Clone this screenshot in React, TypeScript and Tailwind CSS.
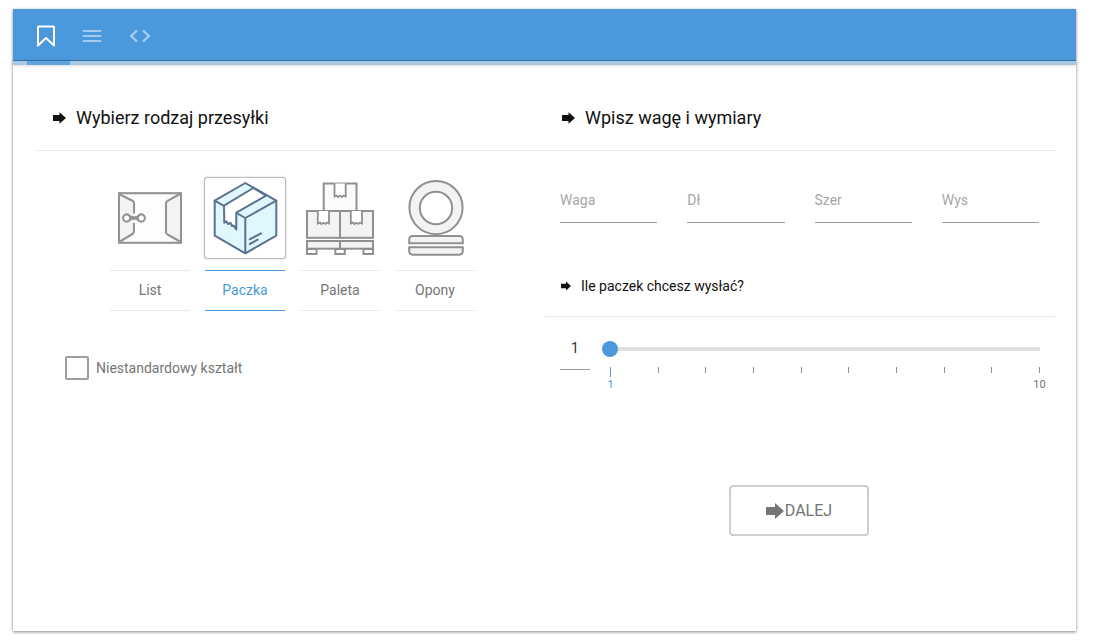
import { useState } from "react";
import type { ReactNode } from "react";

function Arrow({ className }: { className: string }) {
  return (
    <svg viewBox="0 0 18 16" className={className} fill="currentColor" aria-hidden="true">
      <path d="M0 4h9V0l9 8-9 8v-4H0z" />
    </svg>
  );
}

function BookmarkIcon() {
  return (
    <svg width="20" height="22" viewBox="0 0 20 22" fill="none" stroke="currentColor" strokeWidth="2" strokeLinejoin="round" aria-hidden="true">
      <path d="M2 2.5Q2 1.5 3 1.5H17Q18 1.5 18 2.5V20.5L10 13L2 20.5Z" />
    </svg>
  );
}

function LinesIcon() {
  return (
    <svg width="20" height="14" viewBox="0 0 20 14" fill="none" stroke="currentColor" strokeWidth="1.8" strokeLinecap="round" aria-hidden="true">
      <path d="M1.5 2h17M1.5 7h17M1.5 12h17" />
    </svg>
  );
}

function CodeIcon() {
  return (
    <svg width="22" height="14" viewBox="0 0 22 14" fill="none" stroke="currentColor" strokeWidth="2.4" aria-hidden="true">
      <path d="M8 1.5L2.2 7L8 12.5M14 1.5L19.8 7L14 12.5" />
    </svg>
  );
}

function EnvelopeArt() {
  return (
    <svg viewBox="0 0 80 80" className="size-20" fill="none" stroke="#939393" strokeWidth="2.1" aria-hidden="true">
      <rect x="9" y="15.2" width="62" height="49.6" fill="#fdfdfd" />
      <path d="M10 16L24 23.5V56L10 64Z" fill="#f3f3f3" stroke="none" />
      <path d="M70 16L57.5 22.8Q56 23.7 56 25.5V54Q56 55.5 57.5 56.5L70 63.5" fill="#f3f3f3" />
      <path d="M10 16.5L22.5 22.8Q24 23.5 24 25V35.5M24 45V53Q24 55 22.5 56L10 63.5" />
      <circle cx="16.7" cy="40" r="3.6" fill="#fff" />
      <circle cx="31.3" cy="40" r="3.6" fill="#fff" />
      <path d="M18.5 36.6C22 39.4 26 39.4 29.5 36.6L28.2 40L29.5 43.4C26 40.6 22 40.6 18.5 43.4L19.8 40Z" fill="#939393" stroke="#939393" strokeWidth="0.8" />
    </svg>
  );
}

function ParcelArt() {
  return (
    <svg viewBox="0 0 80 80" className="size-20" fill="none" stroke="#5a728f" strokeWidth="2" strokeLinejoin="round" strokeLinecap="round" aria-hidden="true">
      <path d="M40.3 5L71.3 22.7V57.7L40.3 75.3L9.7 57.7V22.7Z" fill="#e0f7fe" />
      <path d="M9.7 22.7L40.3 40L71.3 22.7M40.3 40V75.3" />
      <path d="M19 27.7L48.3 10L61 17.7L31.3 34.7V51.5L28.5 47.5L27 48.2L25.5 44.8L23 46L21.3 43.3L19.3 44.8Z" fill="#fff" />
      <path d="M44.8 61.3L56 55.3M44.8 66L52.7 61.7" />
    </svg>
  );
}

function PalletArt() {
  return (
    <svg viewBox="0 0 80 80" className="size-20" fill="#f3f3f3" stroke="#909090" strokeWidth="2" aria-hidden="true">
      <rect x="23.7" y="5.5" width="32.8" height="27.5" fill="#fbfbfb" />
      <rect x="7" y="33" width="33" height="26.8" />
      <rect x="40" y="33" width="33" height="26.8" />
      <g fill="#fff" strokeWidth="1.8">
        <path d="M34.5 5.5V18.5L36.5 17.5L38 19L40 17.8L42 19L43.7 17.5L45.7 18.5V5.5" />
        <path d="M17.8 33V45.6L20 44.5L21.5 46L23.4 44.8L25.3 46L27 44.5L29 45.6V33" />
        <path d="M50.8 33V45.6L53 44.5L54.5 46L56.4 44.8L58.3 46L60 44.5L62 45.6V33" />
      </g>
      <rect x="7" y="63" width="33" height="7.7" />
      <rect x="40" y="63" width="33" height="7.7" />
      <g fill="#fff">
        <rect x="7" y="71" width="9.5" height="5" />
        <rect x="35.3" y="71" width="9.5" height="5" />
        <rect x="63.5" y="71" width="9.5" height="5" />
      </g>
    </svg>
  );
}

function TyresArt() {
  return (
    <svg viewBox="0 0 80 80" className="size-20" fill="#f3f3f3" stroke="#909090" strokeWidth="2" strokeLinejoin="round" aria-hidden="true">
      <circle cx="41" cy="29.6" r="26.6" />
      <circle cx="41" cy="30" r="16.2" fill="#fff" />
      <path d="M14.2 65.3V61.5Q14.2 58 18 58H64Q67.8 58 67.8 61.5V65.3Z" />
      <path d="M14.2 69.3V73Q14.2 76.8 18 76.8H64Q67.8 76.8 67.8 73V69.3Z" />
    </svg>
  );
}

const kinds: { id: string; label: string; art: ReactNode }[] = [
  { id: "list", label: "List", art: <EnvelopeArt /> },
  { id: "paczka", label: "Paczka", art: <ParcelArt /> },
  { id: "paleta", label: "Paleta", art: <PalletArt /> },
  { id: "opony", label: "Opony", art: <TyresArt /> },
];

const tabs = [
  { id: "order", label: "Zamówienie", icon: <BookmarkIcon /> },
  { id: "details", label: "Szczegóły", icon: <LinesIcon /> },
  { id: "code", label: "Kod", icon: <CodeIcon /> },
];

const ticks = [1, 2, 3, 4, 5, 6, 7, 8, 9, 10];

export default function App() {
  const [tab, setTab] = useState("order");
  const [kind, setKind] = useState("paczka");
  const [count, setCount] = useState(1);

  return (
    <div className="pt-[9px] pr-[17px] pb-3 pl-[13px] font-['Roboto',sans-serif] text-sm text-[#757575]">
      <main className="bg-white pb-[95px] shadow-[0_1px_3px_rgba(0,0,0,0.5)]">
        <nav className="flex h-14 gap-1 bg-[#4b99dc] pl-2">
          {tabs.map((t) => (
            <button
              key={t.id}
              type="button"
              aria-label={t.label}
              onClick={() => setTab(t.id)}
              className={`flex h-[54px] items-center justify-center ${t.id === "order" ? "w-[50px]" : t.id === "details" ? "w-[33px]" : "w-14"} ${tab === t.id ? "text-white" : "text-[#a5ccee]"}`}
            >
              {t.icon}
            </button>
          ))}
        </nav>
        <div className="-mt-[5px] border-t border-[#326ea3] bg-[#a9c8e3] pl-3.5 shadow-[0_1px_3px_rgba(0,0,0,0.15)]">
          <div className="h-1 w-[43px] bg-[#5fa5e0]" />
        </div>

        <div className="grid grid-cols-2 pt-[21px] pr-[21px] pl-[22px]">
          <section>
            <h2 className="flex h-[65px] items-center gap-2.5 border-b border-[#e8e8e8] pl-[18px] text-lg text-[#111]">
              <Arrow className="h-3 w-[13px]" />
              Wybierz rodzaj przesyłki
            </h2>
            <div role="radiogroup" aria-label="Rodzaj przesyłki" className="mt-[27px] flex gap-[15px] pl-[75px]">
              {kinds.map((k) => (
                <label key={k.id} className="relative flex w-20 cursor-pointer flex-col gap-3">
                  <input
                    type="radio"
                    name="kind"
                    value={k.id}
                    checked={kind === k.id}
                    onChange={() => setKind(k.id)}
                    className="peer sr-only"
                  />
                  <span className="block rounded-xs peer-checked:shadow-[0_0_0_1px_#bdbdbd,0_0_2px_1px_#c8c8c8]">{k.art}</span>
                  <span className="border-y border-[#e8e8e8] pt-[9px] pb-2.5 text-center leading-5 peer-checked:border-[#4b99dc] peer-checked:text-[#4b99dc]">
                    {k.label}
                  </span>
                </label>
              ))}
            </div>
            <label className="mt-[45px] flex items-center gap-[7px] pl-[30px]">
              <input type="checkbox" className="size-6 appearance-none rounded-xs border-2 border-[#9e9e9e] bg-white checked:bg-[#4b99dc]" />
              Niestandardowy kształt
            </label>
          </section>

          <section>
            <h2 className="flex h-[65px] items-center gap-2.5 border-b border-[#e8e8e8] pl-[17px] text-lg text-[#111]">
              <Arrow className="h-3 w-[13px]" />
              Wpisz wagę i wymiary
            </h2>
            <div className="mt-[27px] grid grid-cols-4 gap-[30px] pr-4 pl-[15px]">
              {["Waga", "Dł", "Szer", "Wys"].map((name) => (
                <input
                  key={name}
                  type="text"
                  aria-label={name}
                  placeholder={name}
                  className="h-[45px] w-full min-w-0 border-b border-[#9e9e9e] bg-transparent text-[#333] outline-none placeholder:text-[#a6a6a6]"
                />
              ))}
            </div>

            <h3 className="mt-[33px] flex h-[61px] items-center gap-2.5 border-b border-[#e8e8e8] pl-4 text-sm text-[#111]">
              <Arrow className="h-2.5 w-2.5" />
              Ile paczek chcesz wysłać?
            </h3>
            <div className="mt-[9px] flex items-start gap-3 pr-[7px] pl-[15px]">
              <input
                type="text"
                inputMode="numeric"
                aria-label="Liczba paczek"
                value={count}
                onChange={(e) => setCount(Math.min(10, Math.max(1, Number(e.target.value) || 1)))}
                className="h-11 w-[30px] border-b border-[#9e9e9e] bg-transparent text-center text-[#333] outline-none"
              />
              <div className="min-w-0 flex-1 pt-[15px]">
                <input
                  type="range"
                  min={1}
                  max={10}
                  aria-label="Ile paczek chcesz wysłać?"
                  value={count}
                  onChange={(e) => setCount(Number(e.target.value))}
                  className="block h-4 w-full appearance-none bg-[linear-gradient(#e0e0e0,#e0e0e0)] bg-[length:calc(100%-16px)_4px] bg-center bg-no-repeat [&::-webkit-slider-thumb]:size-4 [&::-webkit-slider-thumb]:appearance-none [&::-webkit-slider-thumb]:rounded-full [&::-webkit-slider-thumb]:bg-[#4b99dc]"
                />
                <div className="mt-2.5 flex justify-between px-2 text-[11px] leading-3">
                  {ticks.map((n) => (
                    <div key={n} className={`flex w-px flex-col items-center ${n === count ? "text-[#4b99dc]" : "text-[#757575]"}`}>
                      <span className={n === count ? "h-2.5 w-px bg-[#4b99dc]" : "h-1.5 w-px bg-[#8f8f8f]"} />
                      {(n === 1 || n === 10) && <span className={n === count ? "mt-0.5" : "mt-1.5"}>{n}</span>}
                    </div>
                  ))}
                </div>
              </div>
            </div>

            <div className="mt-[94px] flex justify-center pr-0.5">
              <button
                type="button"
                className="flex h-[51px] w-[140px] items-center justify-center gap-px rounded-sm border-2 border-[#cfcfcf] bg-white text-base"
              >
                <Arrow className="h-4 w-[18px]" />
                DALEJ
              </button>
            </div>
          </section>
        </div>
      </main>
    </div>
  );
}
